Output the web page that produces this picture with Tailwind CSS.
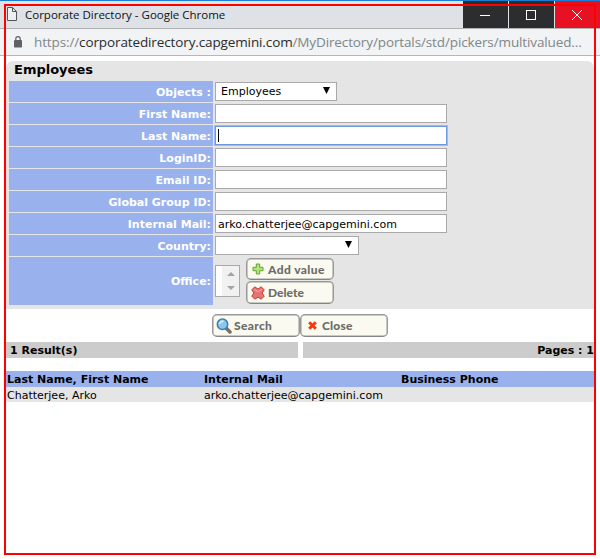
<!DOCTYPE html>
<html lang="en">
<head>
<meta charset="utf-8">
<title>Corporate Directory</title>
<script src="https://cdn.jsdelivr.net/npm/@tailwindcss/browser@4"></script>
</head>
<body class="relative w-[600px] h-[559px] overflow-hidden bg-white text-black text-[11px] leading-[17px] font-['DejaVu_Sans',Verdana,sans-serif]">
  <header class="flex h-[29px] border-t border-t-[#1a7fd4] border-b border-b-[#b0b1b3] bg-[#dee1e6] font-['Open_Sans',sans-serif]">
    <svg class="mt-[6px] ml-[7px] shrink-0" width="10" height="14" viewBox="0 0 10 14" fill="#eceef0" stroke="#555" stroke-width="1"><path d="M.5.5h5l4 4v9h-9z"/><path d="M5.5.5v4h4" fill="none"/></svg>
    <h1 class="ml-[8px] mt-[5px] text-[11.5px] leading-[18px] whitespace-nowrap text-[#111]">Corporate Directory - Google Chrome</h1>
    <div class="ml-auto flex gap-px">
      <div class="w-[45px] bg-[#2b2d2f] flex items-center pl-[17px]"><svg width="10" height="10"><path d="M0 5.5h10" stroke="#fff"/></svg></div>
      <div class="w-[45px] bg-[#2b2d2f] flex items-center pl-[17px]"><svg width="10" height="10"><rect x=".5" y=".5" width="9" height="9" fill="none" stroke="#fff"/></svg></div>
      <div class="w-[45px] bg-[#e81123] flex items-center pl-[17px]"><svg width="10" height="10"><path d="M0 0l10 10M10 0L0 10" stroke="#fff"/></svg></div>
    </div>
  </header>
  <div class="flex h-[27px] border-b border-[#b6b7b8] bg-[#f1f3f4] font-['Open_Sans',sans-serif]">
    <svg class="ml-[14px] mt-[7px] shrink-0" width="8" height="12" viewBox="0 0 8 12"><path d="M1.8 5V2.8a2.2 2.2 0 0 1 4.4 0V5" fill="none" stroke="#5f6368" stroke-width="1.2"/><rect y="4" width="8" height="7.5" rx=".8" fill="#5f6368"/></svg>
    <div class="ml-[12px] text-[13.5px] leading-[27px] tracking-[-0.12px] whitespace-nowrap text-[#80868b]"><span>https://</span><span class="text-[#292b2e]">corporatedirectory.capgemini.com</span><span>/MyDirectory/portals/std/pickers/multivalued...</span></div>
  </div>

  <main class="pt-[5px] px-[6px]">
    <section class="h-[248px] w-[588px] rounded-t-[7px] bg-[#e5e5e5] pl-[3px]">
      <h2 class="h-[20px] pl-[5px] text-[13px] leading-[18px] font-bold">Employees</h2>
      <div class="grid grid-cols-[204px_1fr] gap-x-[2px] gap-y-px auto-rows-[21px]">
        <div class="bg-[#99b2ee] pr-[2px] text-right font-bold leading-[23px] text-white">Objects :</div>
        <div class="mt-px flex h-[19px] w-[122px] items-center justify-between border border-[#a9a9a9] bg-white pl-[5px] pr-[6px]"><span class="leading-[19px]">Employees</span><svg width="7" height="7" class="-mt-[2px]"><path d="M0 0h7L3.5 7z"/></svg></div>

        <div class="bg-[#99b2ee] pr-[2px] text-right font-bold leading-[23px] text-white">First Name:</div>
        <div class="mt-px h-[19px] w-[232px] border border-[#a9a9a9] bg-white"></div>

        <div class="bg-[#99b2ee] pr-[2px] text-right font-bold leading-[23px] text-white">Last Name:</div>
        <div class="mt-px flex h-[19px] w-[232px] items-center border border-[#7098d8] bg-white pl-[2px] shadow-[0_0_0_1px_#9dbdf2]"><span class="h-[13px] w-px bg-black"></span></div>

        <div class="bg-[#99b2ee] pr-[2px] text-right font-bold leading-[23px] text-white">LoginID:</div>
        <div class="mt-px h-[19px] w-[232px] border border-[#a9a9a9] bg-white"></div>

        <div class="bg-[#99b2ee] pr-[2px] text-right font-bold leading-[23px] text-white">Email ID:</div>
        <div class="mt-px h-[19px] w-[232px] border border-[#a9a9a9] bg-white"></div>

        <div class="bg-[#99b2ee] pr-[2px] text-right font-bold leading-[23px] text-white">Global Group ID:</div>
        <div class="mt-px h-[19px] w-[232px] border border-[#a9a9a9] bg-white"></div>

        <div class="bg-[#99b2ee] pr-[2px] text-right font-bold leading-[23px] text-white">Internal Mail:</div>
        <div class="mt-px h-[19px] w-[232px] border border-[#a9a9a9] bg-white pl-[2px] leading-[19px]">arko.chatterjee@capgemini.com</div>

        <div class="bg-[#99b2ee] pr-[2px] text-right font-bold leading-[23px] text-white">Country:</div>
        <div class="mt-px flex h-[19px] w-[144px] items-center justify-end border border-[#a9a9a9] bg-white pr-[6px]"><svg width="7" height="7" class="-mt-[2px]"><path d="M0 0h7L3.5 7z"/></svg></div>
      </div>
      <div class="mt-px flex h-[48px] gap-[2px]">
        <div class="w-[204px] bg-[#99b2ee] pr-[2px] text-right font-bold leading-[49px] text-white">Office:</div>
        <div class="mt-[8px] flex h-[32px] w-[25px] justify-end border border-[#a9a9a9] bg-white">
          <div class="flex w-[17px] flex-col items-center justify-between bg-[#f1f1f1] py-[6px]"><svg width="8" height="4"><path d="M0 4h8L4 0z" fill="#a3a3a3"/></svg><svg width="8" height="4"><path d="M0 0h8L4 4z" fill="#a3a3a3"/></svg></div>
        </div>
        <div class="ml-[4px] mt-px flex flex-col gap-px font-['Lato',sans-serif] text-[12px] font-black text-[#6c6c68]">
          <div class="flex h-[22px] w-[88px] items-center rounded-[5px] border border-[#999] border-b-[#858585] bg-[#fafaf0] pl-[5px] shadow-[inset_0_0_0_0.5px_#999]">
            <svg width="12" height="12" viewBox="0 0 12 12"><path d="M4.3 1h3.4v3.3H11v3.4H7.700V11H4.300V7.700H1V4.300h3.300z" fill="#b4e37c" stroke="#5fa62e" stroke-linejoin="round"/></svg>
            <span class="ml-[4px] whitespace-nowrap tracking-[0.4px]">Add value</span>
          </div>
          <div class="flex h-[23px] w-[88px] items-center rounded-[5px] border border-[#999] border-b-[#858585] bg-[#fafaf0] pl-[4px] shadow-[inset_0_0_0_0.5px_#999]">
            <svg width="14" height="14" viewBox="0 0 14 14"><path d="M3.800.8L7 3 10.200.8 13.200 3.800 11.200 7l2 3.200-3 3L7 11.200l-3.200 2-3-3L2.800 7 .8 3.800z" fill="#e77370" stroke="#c4403f" stroke-linejoin="round"/><path d="M3 3.500l4 2 4-2" stroke="#f4aaa6" fill="none"/></svg>
            <span class="ml-[3px] whitespace-nowrap">Delete</span>
          </div>
        </div>
      </div>
    </section>

    <div class="ml-[206px] mt-[5px] flex font-['Lato',sans-serif] text-[12px] font-black text-[#6c6c68]">
      <div class="flex h-[23px] w-[88px] items-center rounded-[5px] border border-[#999] border-b-[#858585] bg-[#fafaf0] pl-[3px] shadow-[inset_0_0_0_0.5px_#999]">
        <svg width="16" height="16" viewBox="0 0 16 16"><path d="M10 10l4 4" stroke="#777064" stroke-width="3.500" stroke-linecap="round"/><circle cx="6.500" cy="6.300" r="5.200" fill="#8fc6ee" stroke="#3c7fb5" stroke-width="1.500"/><path d="M3.500 6a3 3 0 0 1 4-2.500" stroke="#dff2ff" stroke-width="1.500" fill="none"/></svg>
        <span class="ml-[2px] whitespace-nowrap tracking-[0.35px]">Search</span>
      </div>
      <div class="flex h-[23px] w-[88px] items-center rounded-[5px] border border-[#999] border-b-[#858585] bg-[#fafaf0] pl-[7px] shadow-[inset_0_0_0_0.5px_#999]">
        <svg width="9" height="9" viewBox="0 0 9 9"><path d="M1.200 1.200l6.600 6.600M7.800 1.200l-6.600 6.600" stroke="#f9380a" stroke-width="3"/></svg>
        <span class="ml-[5px] whitespace-nowrap tracking-[0.2px]">Close</span>
      </div>
    </div>

    <div class="mt-[5px] flex w-[589px] gap-[5px] font-bold">
      <div class="h-[16px] w-[292px] bg-[#ccc] pl-[4px]">1 Result(s)</div>
      <div class="h-[16px] flex-1 bg-[#ccc] pr-px text-right">Pages : 1</div>
    </div>

    <div class="mt-[13px] grid h-[16px] w-[588px] grid-cols-[197px_197px_1fr] bg-[#99b2ee] pl-px font-bold">
      <div>Last Name, First Name</div><div>Internal Mail</div><div>Business Phone</div>
    </div>
    <div class="grid h-[15px] w-[588px] grid-cols-[197px_197px_1fr] bg-[#e5e5e5] pl-px">
      <div>Chatterjee, Arko</div><div>arko.chatterjee@capgemini.com</div><div></div>
    </div>
  </main>
  <div class="pointer-events-none absolute left-[4px] top-[4px] h-[551px] w-[592px] border-2 border-[#f00]"></div>
</body>
</html>
